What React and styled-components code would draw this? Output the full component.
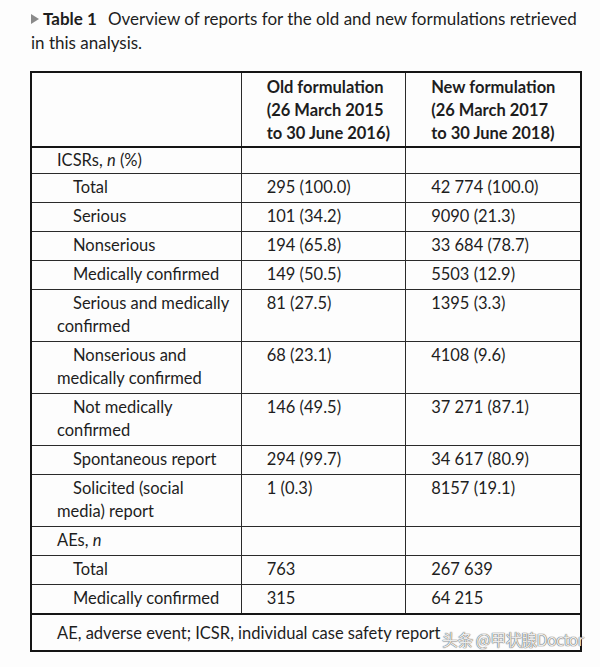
import React from "react";
import styled, { createGlobalStyle } from "styled-components";

const Global = createGlobalStyle`
  html, body { margin: 0; padding: 0; background: #fdfdfd; }
  body { font-family: Lato, "Liberation Sans", sans-serif; color: #1e1e1e; }
`;

const Page = styled.div`
  position: relative;
  width: 600px;
  padding: 7px 0 0 31px;
  box-sizing: border-box;
`;

const Title = styled.div`
  font-size: 17px;
  line-height: 24px;
  width: 552px;
  margin-bottom: 16px;
`;

const Arrow = styled.span`
  display: inline-block;
  width: 0;
  height: 0;
  border-top: 5px solid transparent;
  border-bottom: 5px solid transparent;
  border-left: 8px solid #8a8a8a;
  margin-right: 4px;
  vertical-align: 1px;
`;

const TableNo = styled.b`
  font-weight: 700;
  margin-right: 11px;
`;

const Table = styled.table`
  border-collapse: collapse;
  width: 552px;
  margin-left: -1px;
  border: 2px solid #151515;
  font-size: 16.5px;
  line-height: 23px;
`;

const HeadCell = styled.th`
  text-align: left;
  vertical-align: top;
  font-weight: 700;
  padding: 3px 8px 1px 25px;
  border-left: ${(p) => (p.$first ? "none" : "1px solid #2a2a2a")};
  border-bottom: 2px solid #151515;
`;

const Label = styled.td`
  vertical-align: top;
  padding: ${(p) => (p.$compact ? "1px 8px 1px 25px" : "2px 8px 3px 25px")};
  text-indent: ${(p) => (p.$sub ? "16px" : "0")};
  border-top: 1px solid #2a2a2a;
`;

const Cell = styled.td`
  vertical-align: top;
  padding: ${(p) => (p.$compact ? "1px 8px 1px 25px" : "2px 8px 3px 25px")};
  border-left: 1px solid #2a2a2a;
  border-top: 1px solid #2a2a2a;
`;

const Foot = styled.td`
  padding: 7px 8px 5px 25px;
  border-top: 2px solid #151515;
`;

const Italic = styled.i`
  font-style: italic;
`;

const Watermark = styled.div`
  position: absolute;
  left: 442px;
  top: 628px;
  font-family: "Noto Sans CJK SC", "Liberation Sans", sans-serif;
  font-size: 16px;
  line-height: 22px;
  color: rgba(250, 250, 250, 0.92);
  text-shadow: 0 0 1px #555, 0 0 1px #555;
  letter-spacing: -0.6px;
  white-space: nowrap;
`;

const rows = [
  { label: <>ICSRs, <Italic>n</Italic> (%)</>, a: "", b: "", compact: true },
  { label: "Total", a: "295 (100.0)", b: "42 774 (100.0)", sub: true },
  { label: "Serious", a: "101 (34.2)", b: "9090 (21.3)", sub: true },
  { label: "Nonserious", a: "194 (65.8)", b: "33 684 (78.7)", sub: true },
  { label: "Medically confirmed", a: "149 (50.5)", b: "5503 (12.9)", sub: true },
  { label: "Serious and medically confirmed", a: "81 (27.5)", b: "1395 (3.3)", sub: true },
  { label: "Nonserious and medically confirmed", a: "68 (23.1)", b: "4108 (9.6)", sub: true },
  { label: "Not medically confirmed", a: "146 (49.5)", b: "37 271 (87.1)", sub: true },
  { label: "Spontaneous report", a: "294 (99.7)", b: "34 617 (80.9)", sub: true },
  { label: "Solicited (social media) report", a: "1 (0.3)", b: "8157 (19.1)", sub: true },
  { label: <>AEs, <Italic>n</Italic></>, a: "", b: "" },
  { label: "Total", a: "763", b: "267 639", sub: true },
  { label: "Medically confirmed", a: "315", b: "64 215", sub: true },
];

export default function App() {
  return (
    <Page>
      <Global />
      <Title>
        <Arrow />
        <TableNo>Table 1</TableNo>
        Overview of reports for the old and new formulations retrieved in this analysis.
      </Title>
      <Table>
        <colgroup>
          <col style={{ width: 211 }} />
          <col style={{ width: 165 }} />
          <col style={{ width: 176 }} />
        </colgroup>
        <thead>
          <tr>
            <HeadCell $first />
            <HeadCell>
              Old formulation
              <br />
              (26 March 2015
              <br />
              to 30 June 2016)
            </HeadCell>
            <HeadCell>
              New formulation
              <br />
              (26 March 2017
              <br />
              to 30 June 2018)
            </HeadCell>
          </tr>
        </thead>
        <tbody>
          {rows.map((r, i) => (
            <tr key={i}>
              <Label $sub={r.sub} $compact={r.compact}>{r.label}</Label>
              <Cell $compact={r.compact}>{r.a}</Cell>
              <Cell $compact={r.compact}>{r.b}</Cell>
            </tr>
          ))}
          <tr>
            <Foot colSpan={3}>AE, adverse event; ICSR, individual case safety report</Foot>
          </tr>
        </tbody>
      </Table>
      <Watermark>头条 @甲状腺Doctor</Watermark>
    </Page>
  );
}
